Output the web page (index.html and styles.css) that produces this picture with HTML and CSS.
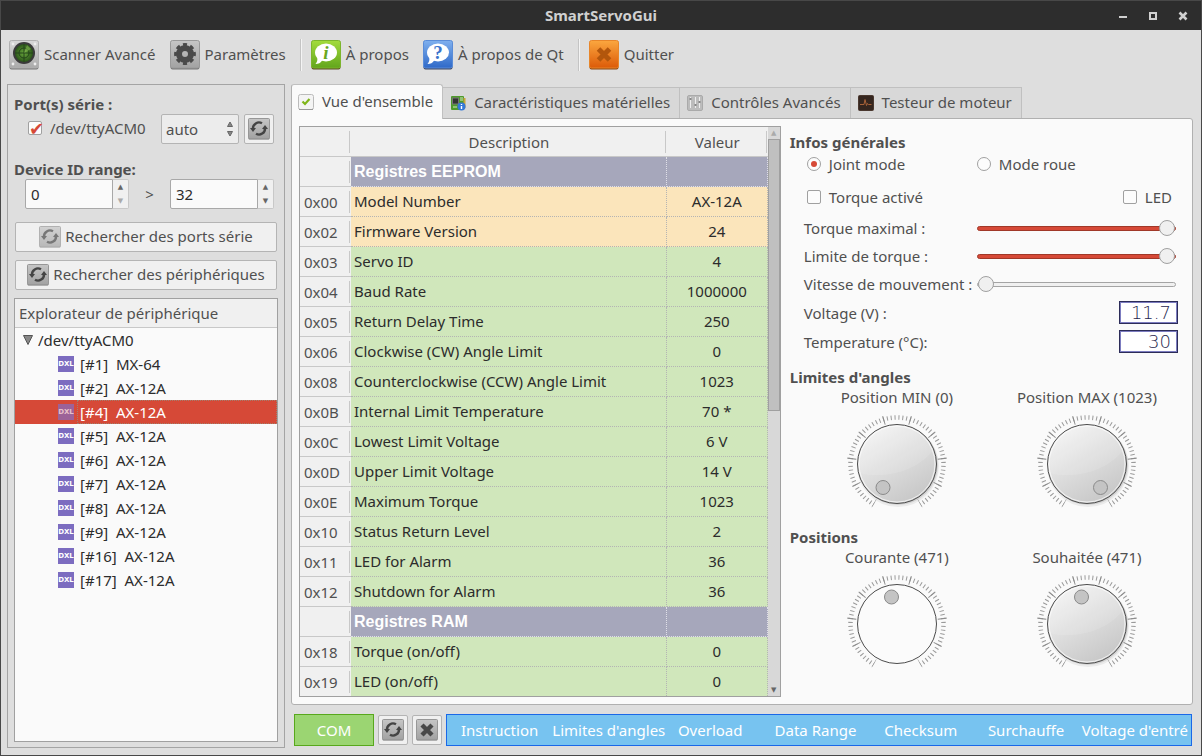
FILE: index.html
```html
<!DOCTYPE html>
<html lang="fr">
<head>
    <meta charset="utf-8">
    <title>SmartServoGui</title>
    <link rel="stylesheet" href="styles.css">
</head>
<body>
    <!-- shared drawings -->
    <svg class="defs" width="0" height="0" aria-hidden="true">
        <defs>
            <linearGradient id="grey" x1="0" y1="0" x2="0" y2="1">
                <stop offset="0" stop-color="#c6c6c6"/>
                <stop offset="1" stop-color="#a2a2a2"/>
            </linearGradient>
            <linearGradient id="light" x1="0" y1="0" x2="0" y2="1">
                <stop offset="0" stop-color="#d8d8d8"/>
                <stop offset="1" stop-color="#aaaaaa"/>
            </linearGradient>
            <linearGradient id="green" x1="0" y1="0" x2="0" y2="1">
                <stop offset="0" stop-color="#a3dc3c"/>
                <stop offset="1" stop-color="#62a51c"/>
            </linearGradient>
            <linearGradient id="blue" x1="0" y1="0" x2="0" y2="1">
                <stop offset="0" stop-color="#7fb0ee"/>
                <stop offset="1" stop-color="#2f69c8"/>
            </linearGradient>
            <linearGradient id="orange" x1="0" y1="0" x2="0" y2="1">
                <stop offset="0" stop-color="#fba73f"/>
                <stop offset="1" stop-color="#dc5a08"/>
            </linearGradient>
            <linearGradient id="knob" x1="0.2" y1="0" x2="0.8" y2="1">
                <stop offset="0" stop-color="#f4f4f4"/>
                <stop offset="1" stop-color="#c4c4c4"/>
            </linearGradient>
            <radialGradient id="radar">
                <stop offset="0" stop-color="#6aa83c"/>
                <stop offset="1" stop-color="#2a5519"/>
            </radialGradient>
            <symbol id="refresh" viewBox="0 0 22 22">
                <rect x="0.5" y="1" width="21" height="20.5" rx="1" fill="#6f6f6f"/>
                <rect x="0.5" y="0.5" width="21" height="20" rx="1" fill="url(#grey)" stroke="#979797"/>
                <g fill="none" stroke="#444" stroke-width="2.4">
                    <path d="M5 11A6 6 0 0 1 14 5.3"/>
                    <path d="M17 10A6 6 0 0 1 8 15.7"/>
                </g>
                <path d="M2 10h6L5 14z" fill="#444"/>
                <path d="M14 11h6L17 7z" fill="#444"/>
            </symbol>
            <symbol id="bubble" viewBox="0 0 30 30">
                <ellipse cx="15" cy="12.5" rx="11" ry="9" fill="#fff"/>
                <path d="M6 17c1 3 0 5-1.5 7 3 0 5-1 7-4z" fill="#fff"/>
            </symbol>
            <symbol id="ticks" viewBox="0 0 104 104">
                <path d="M28.75 92.27A46.5 46.5 0 1 1 75.25 92.27" pathLength="63" fill="none" stroke="#9a9a9a" stroke-width="4.5" stroke-dasharray="0.26 0.74" stroke-dashoffset="0.13"/>
                <path d="M29.25 91.4A45.5 45.5 0 1 1 74.75 91.4" pathLength="63" fill="none" stroke="#8d8d8d" stroke-width="9" stroke-dasharray="0.26 6.74" stroke-dashoffset="0.13"/>
            </symbol>
            <symbol id="dial-body" viewBox="0 0 104 104">
                <circle cx="53" cy="54" r="41" fill="#000" opacity="0.06"/>
                <circle cx="53" cy="53" r="40" fill="#000" opacity="0.1"/>
                <circle cx="52" cy="52" r="39.5" fill="url(#knob)" stroke="#4c4c4c"/>
                <circle cx="52" cy="52" r="38" fill="none" stroke="#fff" opacity="0.7"/>
                <path d="M14.5 61C40 68 74 58 88 38A38 38 0 0 0 15 45A38 38 0 0 0 14.5 61z" fill="#fff" opacity="0.12"/>
            </symbol>
            <symbol id="arrows" viewBox="0 0 8 18">
                <path d="M4 2L6.5 6.500h-5zM4 16L6.500 11.500h-5z" fill="#888" stroke="#666"/>
            </symbol>
        </defs>
    </svg>

    <header class="titlebar">
        <h1>SmartServoGui</h1>
        <div class="window-buttons">
            <button aria-label="Réduire"><svg width="10" height="10"><path d="M1 6h8" stroke="#d0d0d0" stroke-width="2"/></svg></button>
            <button aria-label="Agrandir"><svg width="10" height="10"><rect x="2" y="2" width="6" height="6" fill="none" stroke="#d0d0d0" stroke-width="2"/></svg></button>
            <button aria-label="Fermer"><svg width="10" height="10"><path d="M1.5 1.5l7 7M8.5 1.5l-7 7" stroke="#d0d0d0" stroke-width="2.6"/></svg></button>
        </div>
    </header>

    <nav class="toolbar">
        <button>
            <svg width="30" height="30" viewBox="0 0 30 30">
                <rect x="0.5" y="1" width="29" height="28.5" rx="2" fill="#777"/>
                <rect x="0.5" y="0.5" width="29" height="27.5" rx="2" fill="url(#light)" stroke="#b0b0b0"/>
                <g fill="#eee"><circle cx="4" cy="4" r="1.4"/><circle cx="26" cy="4" r="1.4"/><circle cx="4" cy="24" r="1.4"/><circle cx="26" cy="24" r="1.4"/></g>
                <circle cx="15" cy="13" r="11" fill="#3a3a3a"/>
                <circle cx="15" cy="13" r="9" fill="url(#radar)"/>
                <path d="M15 4v18M6 13h18" stroke="#24451a"/>
                <circle cx="15" cy="13" r="5" fill="none" stroke="#24451a"/>
                <path d="M15 13l3-8 4 4z" fill="#8fc45a" opacity="0.5"/>
            </svg>
            <span>Scanner Avancé</span>
        </button>
        <button>
            <svg width="30" height="30" viewBox="0 0 30 30">
                <rect x="0.5" y="1" width="29" height="28.5" rx="2" fill="#777"/>
                <rect x="0.5" y="0.5" width="29" height="27.5" rx="2" fill="url(#grey)" stroke="#999"/>
                <circle cx="15" cy="14" r="6" fill="none" stroke="#4a4a4a" stroke-width="6"/>
                <circle cx="15" cy="14" r="9.2" fill="none" stroke="#4a4a4a" stroke-width="3.4" pathLength="16" stroke-dasharray="1.1 0.9" stroke-dashoffset="0.55"/>
            </svg>
            <span>Paramètres</span>
        </button>
        <span class="separator"></span>
        <button>
            <svg width="30" height="30" viewBox="0 0 30 30">
                <rect x="0.5" y="1" width="29" height="28.5" rx="2" fill="#5b4a22"/>
                <rect x="0.5" y="0.5" width="29" height="27.5" rx="2" fill="url(#green)" stroke="#7cb52c"/>
                <use href="#bubble"/>
                <text x="15" y="19" class="glyph-info">i</text>
            </svg>
            <span>À propos</span>
        </button>
        <button>
            <svg width="30" height="30" viewBox="0 0 30 30">
                <rect x="0.5" y="1" width="29" height="28.5" rx="2" fill="#3a4460"/>
                <rect x="0.5" y="0.5" width="29" height="27.5" rx="2" fill="url(#blue)" stroke="#5a8cd8"/>
                <use href="#bubble"/>
                <text x="15" y="19" class="glyph-help">?</text>
            </svg>
            <span>À propos de Qt</span>
        </button>
        <span class="separator"></span>
        <button>
            <svg width="30" height="30" viewBox="0 0 30 30">
                <rect x="0.5" y="1" width="29" height="28.5" rx="2" fill="#8a4410"/>
                <rect x="0.5" y="0.5" width="29" height="27.5" rx="2" fill="url(#orange)" stroke="#e8862a"/>
                <path d="M9.5 9l11 11M20.5 9l-11 11" stroke="#b2560c" stroke-width="5"/>
            </svg>
            <span>Quitter</span>
        </button>
    </nav>

    <main class="workspace">
        <aside class="sidebar">
            <h2>Port(s) série :</h2>
            <div class="port-row">
                <label class="check"><input type="checkbox" class="port-check" checked> /dev/ttyACM0</label>
                <div class="select">
                    <select aria-label="Vitesse"><option>auto</option></select>
                    <svg width="8" height="18"><use href="#arrows"/></svg>
                </div>
                <button class="tool" aria-label="Actualiser"><svg width="22" height="22"><use href="#refresh"/></svg></button>
            </div>
            <h2>Device ID range:</h2>
            <div class="range-row">
                <div class="spin">
                    <input type="number" value="0" aria-label="ID minimum">
                    <div class="steps"><button aria-label="Plus">▲</button><button aria-label="Moins" disabled>▼</button></div>
                </div>
                <span>&gt;</span>
                <div class="spin">
                    <input type="number" value="32" aria-label="ID maximum">
                    <div class="steps"><button aria-label="Plus">▲</button><button aria-label="Moins">▼</button></div>
                </div>
            </div>
            <button class="wide"><svg class="faded" width="22" height="22"><use href="#refresh"/></svg><span>Rechercher des ports série</span></button>
            <button class="wide"><svg width="22" height="22"><use href="#refresh"/></svg><span>Rechercher des périphériques</span></button>
            <div class="explorer">
                <h3>Explorateur de périphérique</h3>
                <div class="port"><svg width="10" height="10"><path d="M0.5 0.5h9L5 9.5z" fill="#888" stroke="#555"/></svg>/dev/ttyACM0</div>
                <ul>
                    <li><b>DXL</b><span>[#1]&nbsp; MX-64</span></li>
                    <li><b>DXL</b><span>[#2]&nbsp; AX-12A</span></li>
                    <li class="selected"><b>DXL</b><span>[#4]&nbsp; AX-12A</span></li>
                    <li><b>DXL</b><span>[#5]&nbsp; AX-12A</span></li>
                    <li><b>DXL</b><span>[#6]&nbsp; AX-12A</span></li>
                    <li><b>DXL</b><span>[#7]&nbsp; AX-12A</span></li>
                    <li><b>DXL</b><span>[#8]&nbsp; AX-12A</span></li>
                    <li><b>DXL</b><span>[#9]&nbsp; AX-12A</span></li>
                    <li><b>DXL</b><span>[#16]&nbsp; AX-12A</span></li>
                    <li><b>DXL</b><span>[#17]&nbsp; AX-12A</span></li>
                </ul>
            </div>
        </aside>

        <section class="content">
            <div class="tabs">
                <button class="tab active">
                    <svg width="16" height="16"><rect x="0.5" y="0.5" width="15" height="15" rx="2" fill="#f4f4f4" stroke="#bbb"/><path d="M1 15.5h14" stroke="#999"/><path d="M4.5 7.5l2.500 2.500 4.500-5" fill="none" stroke="#7fb51a" stroke-width="2.2"/></svg>
                    <span>Vue d'ensemble</span>
                </button>
                <button class="tab">
                    <svg width="16" height="16"><rect x="1" y="1" width="13" height="14" rx="1" fill="#4f9a2b"/><path d="M14.5 3v10" stroke="#c9a53a" stroke-width="2"/><rect x="2.5" y="3" width="6" height="6" fill="#333" stroke="#777"/><path d="M10 3h3M10 5h3M3 12h4" stroke="#d4e8c0"/><circle cx="11.5" cy="11.5" r="4" fill="#3478d8"/><path d="M11.5 11v3M11.5 9v1" stroke="#fff" stroke-width="1.4"/></svg>
                    <span>Caractéristiques matérielles</span>
                </button>
                <button class="tab">
                    <svg width="16" height="16"><rect x="0.5" y="0.5" width="15" height="15" rx="1.5" fill="#bcbcbc" stroke="#aaa"/><path d="M3.5 2v11M8.5 2v11M12.5 2v11" stroke="#eee"/><path d="M2.5 4h2M7.5 10h2M11.5 7h2" stroke="#888" stroke-width="2"/></svg>
                    <span>Contrôles Avancés</span>
                </button>
                <button class="tab">
                    <svg width="16" height="16"><rect x="0.5" y="0.5" width="15" height="15" rx="1" fill="#35261f" stroke="#4a382f"/><path d="M2 9.5h4l1-5 1.500 6 1-2 1 1h3" fill="none" stroke="#a86238"/></svg>
                    <span>Testeur de moteur</span>
                </button>
            </div>

            <div class="pane">
                <div class="registers">
                    <table>
                        <thead>
                            <tr><th class="addr"></th><th>Description</th><th class="value">Valeur</th></tr>
                        </thead>
                        <tbody>
                            <tr class="group"><th></th><td>Registres EEPROM</td><td></td></tr>
                            <tr class="fixed"><th>0x00</th><td>Model Number</td><td>AX-12A</td></tr>
                            <tr class="fixed"><th>0x02</th><td>Firmware Version</td><td>24</td></tr>
                            <tr><th>0x03</th><td>Servo ID</td><td>4</td></tr>
                            <tr><th>0x04</th><td>Baud Rate</td><td>1000000</td></tr>
                            <tr><th>0x05</th><td>Return Delay Time</td><td>250</td></tr>
                            <tr><th>0x06</th><td>Clockwise (CW) Angle Limit</td><td>0</td></tr>
                            <tr><th>0x08</th><td>Counterclockwise (CCW) Angle Limit</td><td>1023</td></tr>
                            <tr><th>0x0B</th><td>Internal Limit Temperature</td><td>70 *</td></tr>
                            <tr><th>0x0C</th><td>Lowest Limit Voltage</td><td>6 V</td></tr>
                            <tr><th>0x0D</th><td>Upper Limit Voltage</td><td>14 V</td></tr>
                            <tr><th>0x0E</th><td>Maximum Torque</td><td>1023</td></tr>
                            <tr><th>0x10</th><td>Status Return Level</td><td>2</td></tr>
                            <tr><th>0x11</th><td>LED for Alarm</td><td>36</td></tr>
                            <tr><th>0x12</th><td>Shutdown for Alarm</td><td>36</td></tr>
                            <tr class="group"><th></th><td>Registres RAM</td><td></td></tr>
                            <tr><th>0x18</th><td>Torque (on/off)</td><td>0</td></tr>
                            <tr><th>0x19</th><td>LED (on/off)</td><td>0</td></tr>
                        </tbody>
                    </table>
                    <div class="scrollbar">
                        <button aria-label="Haut" class="dim">▲</button>
                        <div class="thumb"></div>
                        <button aria-label="Bas">▼</button>
                    </div>
                </div>

                <div class="infos">
                    <h2>Infos générales</h2>
                    <div class="modes">
                        <label class="check"><input type="radio" name="mode" checked> Joint mode</label>
                        <label class="check"><input type="radio" name="mode"> Mode roue</label>
                    </div>
                    <div class="toggles">
                        <label class="check"><input type="checkbox"> Torque activé</label>
                        <label class="check"><input type="checkbox"> LED</label>
                    </div>
                    <div class="field">
                        <label for="torque-max">Torque maximal :</label>
                        <input type="range" id="torque-max" class="full" min="0" max="1023" value="1023">
                    </div>
                    <div class="field">
                        <label for="torque-limit">Limite de torque :</label>
                        <input type="range" id="torque-limit" class="full" min="0" max="1023" value="1023">
                    </div>
                    <div class="field">
                        <label for="speed">Vitesse de mouvement :</label>
                        <input type="range" id="speed" min="0" max="1023" value="0">
                    </div>
                    <div class="field reading">
                        <label for="voltage">Voltage (V) :</label>
                        <output id="voltage" class="lcd">11.7</output>
                    </div>
                    <div class="field reading">
                        <label for="temperature">Temperature (°C):</label>
                        <output id="temperature" class="lcd">30</output>
                    </div>

                    <h2 class="section">Limites d'angles</h2>
                    <div class="dials">
                        <label class="dial">Position MIN (0)
                            <span class="face">
                                <svg width="104" height="104" viewBox="0 0 104 104"><use href="#ticks"/><use href="#dial-body"/><circle cx="38" cy="75.5" r="7" fill="#c4c4c4" stroke="#8a8a8a"/></svg>
                                <input type="range" min="0" max="1023" value="0">
                            </span>
                        </label>
                        <label class="dial">Position MAX (1023)
                            <span class="face">
                                <svg width="104" height="104" viewBox="0 0 104 104"><use href="#ticks"/><use href="#dial-body"/><circle cx="65.5" cy="75.5" r="7" fill="#c4c4c4" stroke="#8a8a8a"/></svg>
                                <input type="range" min="0" max="1023" value="1023">
                            </span>
                        </label>
                    </div>

                    <h2 class="section">Positions</h2>
                    <div class="dials">
                        <label class="dial">Courante (471)
                            <span class="face">
                                <svg width="104" height="104" viewBox="0 0 104 104"><use href="#ticks"/><circle cx="52" cy="52" r="39.5" fill="#fbfbfb" stroke="#4c4c4c"/><circle cx="46.5" cy="25" r="7" fill="#c4c4c4" stroke="#8a8a8a"/></svg>
                                <input type="range" min="0" max="1023" value="471" disabled>
                            </span>
                        </label>
                        <label class="dial">Souhaitée (471)
                            <span class="face">
                                <svg width="104" height="104" viewBox="0 0 104 104"><use href="#ticks"/><use href="#dial-body"/><circle cx="46.5" cy="25" r="7" fill="#c4c4c4" stroke="#8a8a8a"/></svg>
                                <input type="range" min="0" max="1023" value="471">
                            </span>
                        </label>
                    </div>
                </div>
            </div>

            <footer class="status">
                <div class="com">COM</div>
                <button class="tool" aria-label="Actualiser"><svg width="22" height="22"><use href="#refresh"/></svg></button>
                <button class="tool" aria-label="Effacer">
                    <svg width="22" height="22"><rect x="0.5" y="1" width="21" height="20.5" rx="1" fill="#6f6f6f"/><rect x="0.5" y="0.5" width="21" height="20" rx="1" fill="url(#grey)" stroke="#979797"/><path d="M6 6l10 10M16 6L6 16" stroke="#484848" stroke-width="4.4"/></svg>
                </button>
                <div class="errors">
                    <span>Instruction</span>
                    <span>Limites d'angles</span>
                    <span>Overload</span>
                    <span>Data Range</span>
                    <span>Checksum</span>
                    <span>Surchauffe</span>
                    <span>Voltage d'entré</span>
                </div>
            </footer>
        </section>
    </main>
</body>
</html>
```
FILE: styles.css
```css
* {
    box-sizing: border-box;
}

body {
    display: flex;
    flex-direction: column;
    min-height: 100vh;
    margin: 0;
    border: 1px solid #484848;
    background-color: #dedede;
    color: #505050;
    font-family: "Noto Sans", "Open Sans", sans-serif;
    font-size: 15px;
    line-height: 20px;
}

button, input, select {
    margin: 0;
    color: inherit;
    font: inherit;
}

button {
    padding: 0;
    border: none;
    background: none;
    white-space: nowrap;
}

svg {
    display: block;
    flex: none;
}

h1, h2, h3 {
    margin: 0;
    font-size: 15px;
    line-height: 20px;
}

.defs {
    position: absolute;
}

/* title bar */
.titlebar {
    display: grid;
    grid-template-columns: 1fr auto 1fr;
    align-items: center;
    height: 29px;
    background-color: #2d2d2d;
    color: #d0d0d0;
}

.titlebar h1 {
    grid-column: 2;
    padding-bottom: 2px;
}

.window-buttons {
    display: flex;
    justify-content: flex-end;
    gap: 20px;
    padding-right: 13px;
}

/* toolbar */
.toolbar {
    display: flex;
    align-items: center;
    gap: 14px;
    height: 50px;
    padding: 0 8px;
}

.toolbar button {
    display: flex;
    align-items: center;
    gap: 5px;
}

.toolbar button span, .wide span, .tab span {
    padding-bottom: 2px;
}

.separator {
    width: 2px;
    height: 32px;
    border-left: 1px solid #c4c4c4;
    border-right: 1px solid #f4f4f4;
    margin-right: -5px;
}

.glyph-info, .glyph-help {
    font-family: "Liberation Serif", serif;
    font-size: 19px;
    font-weight: bold;
    text-anchor: middle;
}

.glyph-info {
    font-style: italic;
    fill: #6aa81e;
}

.glyph-help {
    fill: #3b74cc;
}

/* main layout */
.workspace {
    display: grid;
    grid-template-columns: 278px minmax(0, 1fr);
    gap: 6px;
    flex: 1;
    padding: 4px 8px 7px 6px;
}

.sidebar {
    display: flex;
    flex-direction: column;
    padding: 9px 6px 5px;
    border: 1px solid #a4a4a4;
}

.check {
    display: flex;
    align-items: center;
    gap: 8px;
}

input[type="checkbox"], input[type="radio"] {
    appearance: none;
    display: grid;
    place-items: center;
    width: 14px;
    height: 14px;
    border: 1px solid #a0a0a0;
    border-radius: 2px;
    background-color: #fcfcfc;
}

input[type="radio"] {
    border-radius: 50%;
}

input[type="radio"]:checked::after {
    content: "";
    width: 6px;
    height: 6px;
    border-radius: 50%;
    background-color: #d64937;
}

.port-check:checked::after {
    content: "✔";
    color: #d64937;
    font-family: "DejaVu Sans", sans-serif;
    font-size: 18px;
    line-height: 14px;
}

.port-row {
    display: grid;
    grid-template-columns: 1fr 78px 30px;
    gap: 5px;
    margin-bottom: 15px;
    padding: 0 4px 0 14px;
}

.port-row .check {
    padding-bottom: 2px;
}

.select {
    display: grid;
    align-items: center;
}

.select select, .select svg {
    grid-area: 1 / 1;
}

.select select {
    appearance: none;
    height: 30px;
    padding: 0 4px;
    border: 1px solid #b4b4b4;
    border-radius: 2px;
    background-color: #ececec;
}

.select svg {
    justify-self: end;
    margin-right: 5px;
    pointer-events: none;
}

.tool {
    display: flex;
    align-items: center;
    justify-content: center;
    width: 30px;
    height: 30px;
    border: 1px solid #b4b4b4;
    border-radius: 2px;
    background-color: #f0f0f0;
}

.range-row {
    display: grid;
    grid-template-columns: 104px 1fr 104px;
    text-align: center;
    align-items: center;
    padding: 0 4px 0 11px;
    margin-bottom: 13px;
}

.spin {
    display: flex;
    height: 30px;
}

.spin input {
    appearance: textfield;
    flex: 1;
    min-width: 0;
    padding: 0 5px;
    border: 1px solid #a8a8a8;
    border-radius: 2px 0 0 2px;
    background-color: #fafafa;
    color: #2c2c2c;
}

.spin input::-webkit-inner-spin-button {
    appearance: none;
}

.steps {
    display: flex;
    flex-direction: column;
    width: 16px;
    border: 1px solid #c8c8c8;
    border-left: none;
    border-radius: 0 2px 2px 0;
    background-color: #f0f0f0;
}

.steps button, .scrollbar button {
    flex: 1;
    color: #666;
    font-family: "DejaVu Sans", sans-serif;
    font-size: 7px;
    line-height: 12px;
}

.steps button:disabled, .scrollbar .dim {
    color: #aaa;
}

.wide {
    display: flex;
    align-items: center;
    justify-content: center;
    gap: 4px;
    height: 30px;
    margin: 0 1px 8px;
    border: 1px solid #b4b4b4;
    border-radius: 2px;
    background-color: #f0f0f0;
}

.faded {
    opacity: 0.7;
}

/* device tree */
.explorer {
    flex: 1;
    border: 1px solid #a0a0a0;
    background-color: #fafafa;
    color: #2c2c2c;
}

.explorer h3 {
    height: 29px;
    padding: 4px;
    border-bottom: 1px solid #c8c8c8;
    background-color: #f0f0f0;
    color: #505050;
    font-weight: normal;
}

.port {
    display: flex;
    align-items: center;
    gap: 5px;
    height: 24px;
    padding-left: 8px;
}

.explorer ul {
    margin: 0;
    padding: 0;
    list-style: none;
}

.explorer li {
    display: flex;
    align-items: center;
    gap: 3px;
    height: 24px;
    padding-left: 43px;
}

.explorer li b {
    width: 16px;
    height: 16px;
    background-color: #7c6cc0;
    color: #fff;
    font-family: "DejaVu Sans", sans-serif;
    font-size: 7px;
    line-height: 16px;
    text-align: center;
}

.explorer li span {
    flex: 1;
    padding-left: 3px;
    line-height: 24px;
}

.explorer .selected {
    background-color: #d64937;
    color: #fff;
}

.explorer .selected b {
    background-color: #9c6298;
    color: #e8c0c8;
}

.selected span {
    outline: 1px dotted #a08070;
    outline-offset: -1px;
}

/* tabs */
.content {
    display: flex;
    flex-direction: column;
}

.tabs {
    display: flex;
    align-items: flex-end;
    height: 34px;
}

.tab {
    display: flex;
    align-items: center;
    gap: 8px;
    height: 31px;
    padding: 0 9px 0 7px;
    border: 1px solid #c0c0c0;
    border-left: none;
    border-bottom: none;
    background-color: #d8d8d8;
}

.tab.active {
    z-index: 1;
    height: 35px;
    margin-bottom: -1px;
    padding: 0 9px 0 6px;
    border-left: 1px solid #b0b0b0;
    border-radius: 3px 3px 0 0;
    background-color: #fafafa;
}

.pane {
    display: grid;
    grid-template-columns: minmax(0, 484fr) minmax(0, 394fr);
    gap: 9px;
    align-items: start;
    padding: 7px 10px 7px 7px;
    border: 1px solid #b0b0b0;
    border-radius: 0 3px 3px 3px;
    background-color: #fafafa;
}

/* register table */
.registers {
    display: flex;
    border: 1px solid #a0a0a0;
}

table {
    flex: 1;
    border-collapse: separate;
    border-spacing: 0;
    table-layout: fixed;
}

th, td {
    height: 30px;
    padding: 0 3px;
    font-weight: normal;
}

th {
    border-bottom: 1px solid #c8c8c8;
    background: linear-gradient(#c8c8c8, #c8c8c8) right 1px center / 1px 22px no-repeat #f0f0f0;
}

tbody th {
    padding: 0 4px;
    text-align: left;
}

.addr {
    width: 51px;
}

.value {
    width: 101px;
}

td {
    padding-bottom: 2px;
    border-right: 1px dotted #b4b4b4;
    border-bottom: 1px dotted #b4b4b4;
    background-color: #d0e7bb;
    color: #2c2c2c;
}

td:last-child {
    text-align: center;
}

tbody tr:last-child > * {
    height: 29px;
    border-bottom: none;
}

.fixed td {
    background-color: #fbe5bb;
}

.group td {
    padding-bottom: 0;
    border-color: #e0e0e8;
    background-color: #a6a7bb;
    color: #fff;
    font-family: "Liberation Sans", sans-serif;
    font-size: 16px;
    font-weight: bold;
}

.scrollbar {
    display: flex;
    flex-direction: column;
    width: 12px;
    background-color: #d8d8d8;
}

.scrollbar button {
    flex: none;
    height: 12px;
}

.scrollbar .thumb {
    height: 272px;
    margin-bottom: auto;
    border: 1px solid #a0a0a0;
    background-color: #c0c0c0;
}

/* right column */
.infos {
    padding-top: 6px;
}

.modes, .toggles, .field {
    display: grid;
    grid-template-columns: 170px 1fr;
    align-items: center;
    padding: 0 6px 0 14px;
}

.modes, .toggles {
    padding: 2px 10px 0 17px;
}

.toggles {
    justify-content: space-between;
    grid-template-columns: auto auto;
    padding-top: 13px;
    margin-bottom: 7px;
}

.field {
    grid-template-columns: 173px 1fr;
    height: 28px;
    white-space: nowrap;
}

.field.reading {
    height: 29px;
    padding-right: 4px;
}

input[type="range"] {
    appearance: none;
    width: 100%;
    height: 16px;
    background: none;
}

.field input::-webkit-slider-runnable-track {
    height: 5px;
    border: 1px solid #a4a4a4;
    border-radius: 3px;
    background-color: #f0f0f0;
}

.field .full::-webkit-slider-runnable-track {
    border-color: #a03828;
    background-color: #d64937;
}

.field input::-webkit-slider-thumb {
    appearance: none;
    width: 16px;
    height: 16px;
    margin-top: -7px;
    border: 1px solid #a0a0a0;
    border-radius: 50%;
    background-color: #f0f0f0;
}

.lcd {
    justify-self: end;
    width: 59px;
    height: 23px;
    padding-right: 6px;
    border: 1px solid #2c2c58;
    outline: 1px solid #7c7cc0;
    outline-offset: -2px;
    background-color: #fff;
    color: #26264e;
    font-family: "DejaVu Sans", sans-serif;
    font-size: 18px;
    font-weight: 200;
    line-height: 21px;
    text-align: right;
}

.section {
    margin-top: 11px;
}

.dials {
    display: grid;
    grid-template-columns: 1fr 1fr;
    padding-left: 12px;
}

.dial {
    display: flex;
    flex-direction: column;
    align-items: center;
    gap: 5px;
}

.face {
    position: relative;
}

.face input {
    position: absolute;
    inset: 0;
    height: 100%;
    opacity: 0;
}

/* status bar */
.status {
    display: flex;
    align-items: center;
    gap: 4px;
    margin: 9px 1px 0 3px;
    white-space: nowrap;
}

.com {
    width: 80px;
    height: 32px;
    border: 1px solid #58a81c;
    background-color: #9bd572;
    color: #fff;
    line-height: 31px;
    text-align: center;
}

.errors {
    display: grid;
    grid-template-columns: repeat(6, minmax(0, 105fr)) minmax(0, 112fr);
    flex: 1;
    height: 32px;
    overflow: hidden;
    border: 1px solid #1a68e8;
    background-color: #77c3f0;
    color: #fff;
    line-height: 31px;
    text-align: center;
}
```
